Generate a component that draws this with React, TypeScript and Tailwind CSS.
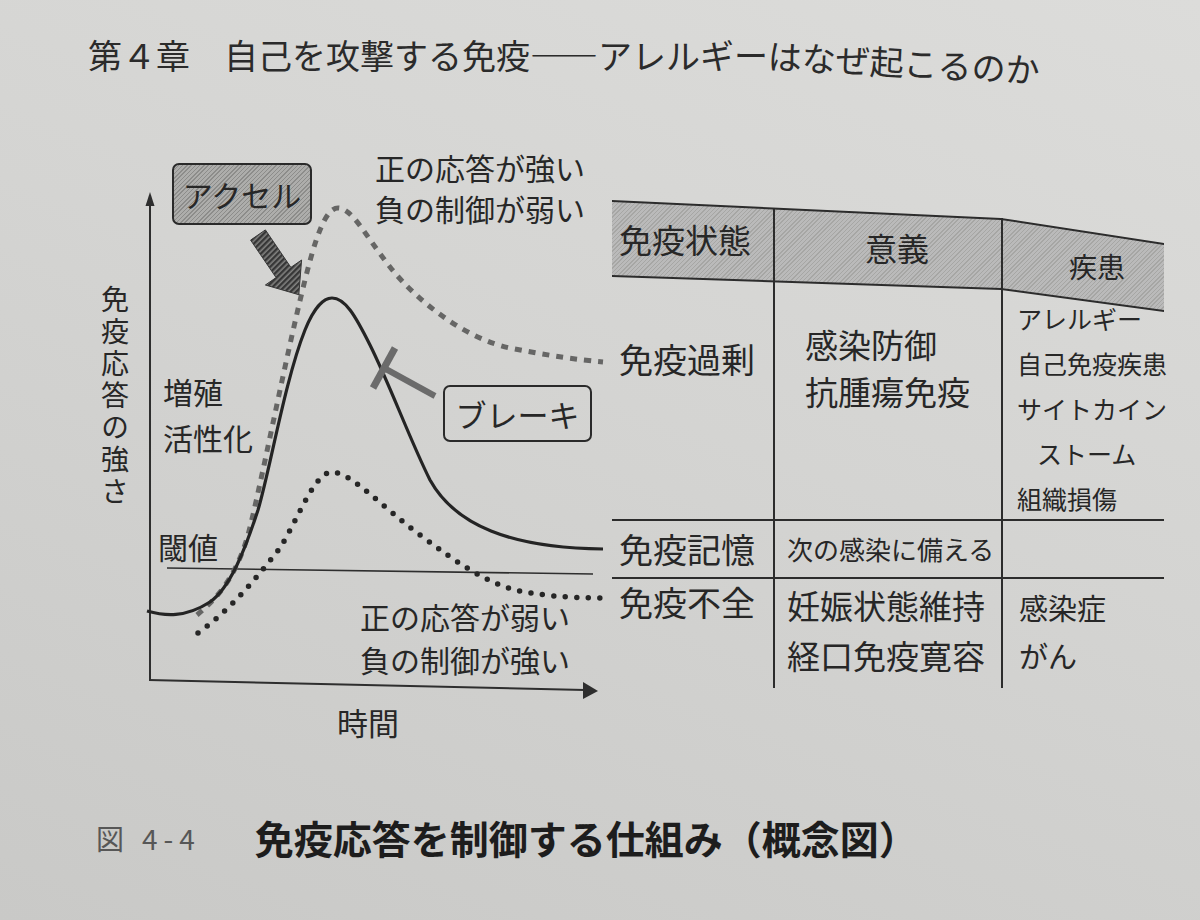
function Chart() {
  return (
    <div className="relative h-[600px] w-[522px] shrink-0">
      <svg className="absolute inset-0" width="522" height="600" viewBox="0 0 522 600">
        <defs>
          <pattern id="hatch-dark" width="4" height="4" patternUnits="userSpaceOnUse" patternTransform="rotate(45)">
            <rect width="4" height="4" fill="#828280" />
            <rect width="2.4" height="4" fill="#363636" />
          </pattern>
        </defs>
        {/* axes + threshold */}
        <line x1="60" y1="64" x2="60" y2="541" stroke="#2e2e2e" strokeWidth="2" />
        <polygon points="60,52 55.5,66 64.5,66" fill="#2e2e2e" />
        <line x1="59" y1="540" x2="495" y2="550" stroke="#2e2e2e" strokeWidth="2" />
        <polygon points="508,551 493,542 493,559" fill="#2e2e2e" />
        <line x1="77" y1="428" x2="503" y2="434" stroke="#2e2e2e" strokeWidth="1.6" />

        {/* strong response */}
        <path
          d="M107,475 C125,460 145,440 158,395 C170,350 195,220 215,140 C225,100 235,68 248,68 C262,68 275,95 300,127 C330,165 380,200 420,208 C460,216 490,220 513,222"
          fill="none"
          stroke="#666665"
          strokeWidth="5"
          strokeDasharray="7 7"
        />
        {/* weak response */}
        <path
          d="M108,493 C140,470 165,440 190,408 C210,375 225,332 242,332 C260,332 290,365 330,395 C370,425 400,445 430,451 C460,457 490,458 515,458"
          fill="none"
          stroke="#262626"
          strokeWidth="5.5"
          strokeLinecap="round"
          strokeDasharray="0 11.5"
        />
        {/* normal response */}
        <path
          d="M57,471 C75,476 95,478 120,462 C140,448 155,410 168,370 C180,330 195,240 215,190 C225,165 235,158 242,158 C255,158 265,175 280,205 C300,245 320,300 340,340 C365,385 420,408 513,409"
          fill="none"
          stroke="#242424"
          strokeWidth="3.2"
        />

        {/* brake mark */}
        <line x1="283" y1="248" x2="305" y2="208" stroke="#6b6b6b" strokeWidth="7" />
        <line x1="294" y1="228" x2="345" y2="256" stroke="#6b6b6b" strokeWidth="6" />

        {/* accelerator arrow */}
        <polygon
          points="160.6,100.1 186.1,137.6 175.4,145 208.8,154.7 211.6,120 200.9,127.4 175.4,89.9"
          fill="url(#hatch-dark)"
          stroke="#363636"
          strokeWidth="1"
        />
      </svg>

      <div className="absolute left-[11px] top-[145px] text-[28px] leading-[28px] tracking-[4px] [writing-mode:vertical-rl]">
        免疫応答の強さ
      </div>

      <div className="absolute left-[82px] top-[23px] flex h-[62px] w-[140px] items-center justify-center rounded-[7px] border-2 border-[#2a2a2a] bg-[repeating-linear-gradient(135deg,#8c8c8a_0px,#8c8c8a_1px,#adadab_1px,#adadab_3px)] text-[30px] leading-none">
        アクセル
      </div>

      <div className="absolute left-[285px] top-[7px] whitespace-nowrap text-[30px] leading-[41px]">
        正の応答が強い
        <br />
        負の制御が弱い
      </div>

      <div className="absolute left-[73px] top-[236px] whitespace-nowrap text-[30px] leading-none">増殖</div>
      <div className="absolute left-[73px] top-[282px] whitespace-nowrap text-[30px] leading-none">活性化</div>
      <div className="absolute left-[68px] top-[391px] whitespace-nowrap text-[30px] leading-none">閾値</div>

      <div className="absolute left-[353px] top-[245px] flex h-[57px] w-[149px] items-center justify-center rounded-[7px] border-2 border-[#2a2a2a] text-[31px] leading-none">
        ブレーキ
      </div>

      <div className="absolute left-[270px] top-[455px] whitespace-nowrap text-[30px] leading-[43px]">
        正の応答が弱い
        <br />
        負の制御が強い
      </div>

      <div className="absolute left-[247px] top-[566px] text-[31px] leading-none">時間</div>
    </div>
  );
}

function StateTable() {
  return (
    <div className="relative mt-[60px] w-[552px] shrink-0">
      {/* shaded header band with curved edges */}
      <div className="absolute inset-x-0 top-0 h-[112px] bg-[#2c2c2c] [clip-path:polygon(0_0,389px_18px,100%_43px,100%_100%,389px_90px,0_77px)]">
        <div className="h-full w-full bg-[repeating-linear-gradient(135deg,#a6a6a4_0px,#a6a6a4_1px,#bababa_1px,#bababa_3px)] [clip-path:polygon(0_2px,389px_20px,100%_45px,100%_110px,389px_88px,0_75px)]" />
      </div>

      <div className="relative grid grid-cols-[161px_228px_163px] grid-rows-[95px_226px_58px_109px] whitespace-nowrap">
        {/* header */}
        <div className="pl-[7px] pt-[23px] text-[33px] leading-none">免疫状態</div>
        <div className="mt-[8px] border-l-2 border-[#2c2c2c] pl-[90px] pt-[23px] text-[32px] leading-none">意義</div>
        <div className="mt-[18px] border-l-2 border-[#2c2c2c] pl-[66px] pt-[34px] text-[28px] leading-none">疾患</div>

        {/* 免疫過剰 */}
        <div className="border-b-2 border-[#2c2c2c] pl-[7px] pt-[47px] text-[34px] leading-none">免疫過剰</div>
        <div className="border-b-2 border-l-2 border-[#2c2c2c] pl-[30px] pt-[26px] text-[33px] leading-[47px]">
          感染防御
          <br />
          抗腫瘍免疫
        </div>
        <div className="border-b-2 border-l-2 border-[#2c2c2c] pl-[14px] pt-[1px] text-[25px] leading-[45px]">
          <div>アレルギー</div>
          <div>自己免疫疾患</div>
          <div>サイトカイン</div>
          <div className="pl-[20px]">ストーム</div>
          <div>組織損傷</div>
        </div>

        {/* 免疫記憶 */}
        <div className="flex items-center border-b-2 border-[#2c2c2c] pl-[7px] text-[34px] leading-none">免疫記憶</div>
        <div className="flex items-center border-b-2 border-l-2 border-[#2c2c2c] pl-[12px] text-[26px] leading-none">
          次の感染に備える
        </div>
        <div className="border-b-2 border-l-2 border-[#2c2c2c]" />

        {/* 免疫不全 */}
        <div className="pl-[7px] pt-[6px] text-[34px] leading-none">免疫不全</div>
        <div className="border-l-2 border-[#2c2c2c] pl-[12px] pt-[1px] text-[33px] leading-[50px]">
          妊娠状態維持
          <br />
          経口免疫寛容
        </div>
        <div className="border-l-2 border-[#2c2c2c] pl-[16px] pt-[4px] text-[29px] leading-[48px]">
          感染症
          <br />
          がん
        </div>
      </div>
    </div>
  );
}

export default function App() {
  return (
    <div className="h-[920px] w-[1200px] overflow-hidden bg-[linear-gradient(200deg,#dcdcda_0%,#d4d4d2_45%,#c9c9c7_100%)] text-[#272727] [font-family:'Noto_Sans_CJK_JP','Noto_Sans_CJK_SC',sans-serif]">
      <h1 className="whitespace-nowrap pl-[88px] pt-[38px] text-[34px] font-normal leading-none text-[#2b2b2b]">
        第４章　自己を攻撃する免疫――アレルギー
        <span className="inline-block origin-left rotate-[3deg]">はなぜ起こるのか</span>
      </h1>

      <div className="mt-[68px] flex items-start pl-[90px]">
        <Chart />
        <StateTable />
      </div>

      <p className="mt-[78px] flex items-center whitespace-nowrap pl-[96px] leading-none">
        <span className="text-[28px] text-[#575757]">図</span>
        <span className="ml-[18px] text-[28px] tracking-[6px] text-[#575757]">4-4</span>
        <span className="ml-[54px] text-[39px] font-bold text-[#1d1d1d]">免疫応答を制御する仕組み（概念図）</span>
      </p>
    </div>
  );
}
